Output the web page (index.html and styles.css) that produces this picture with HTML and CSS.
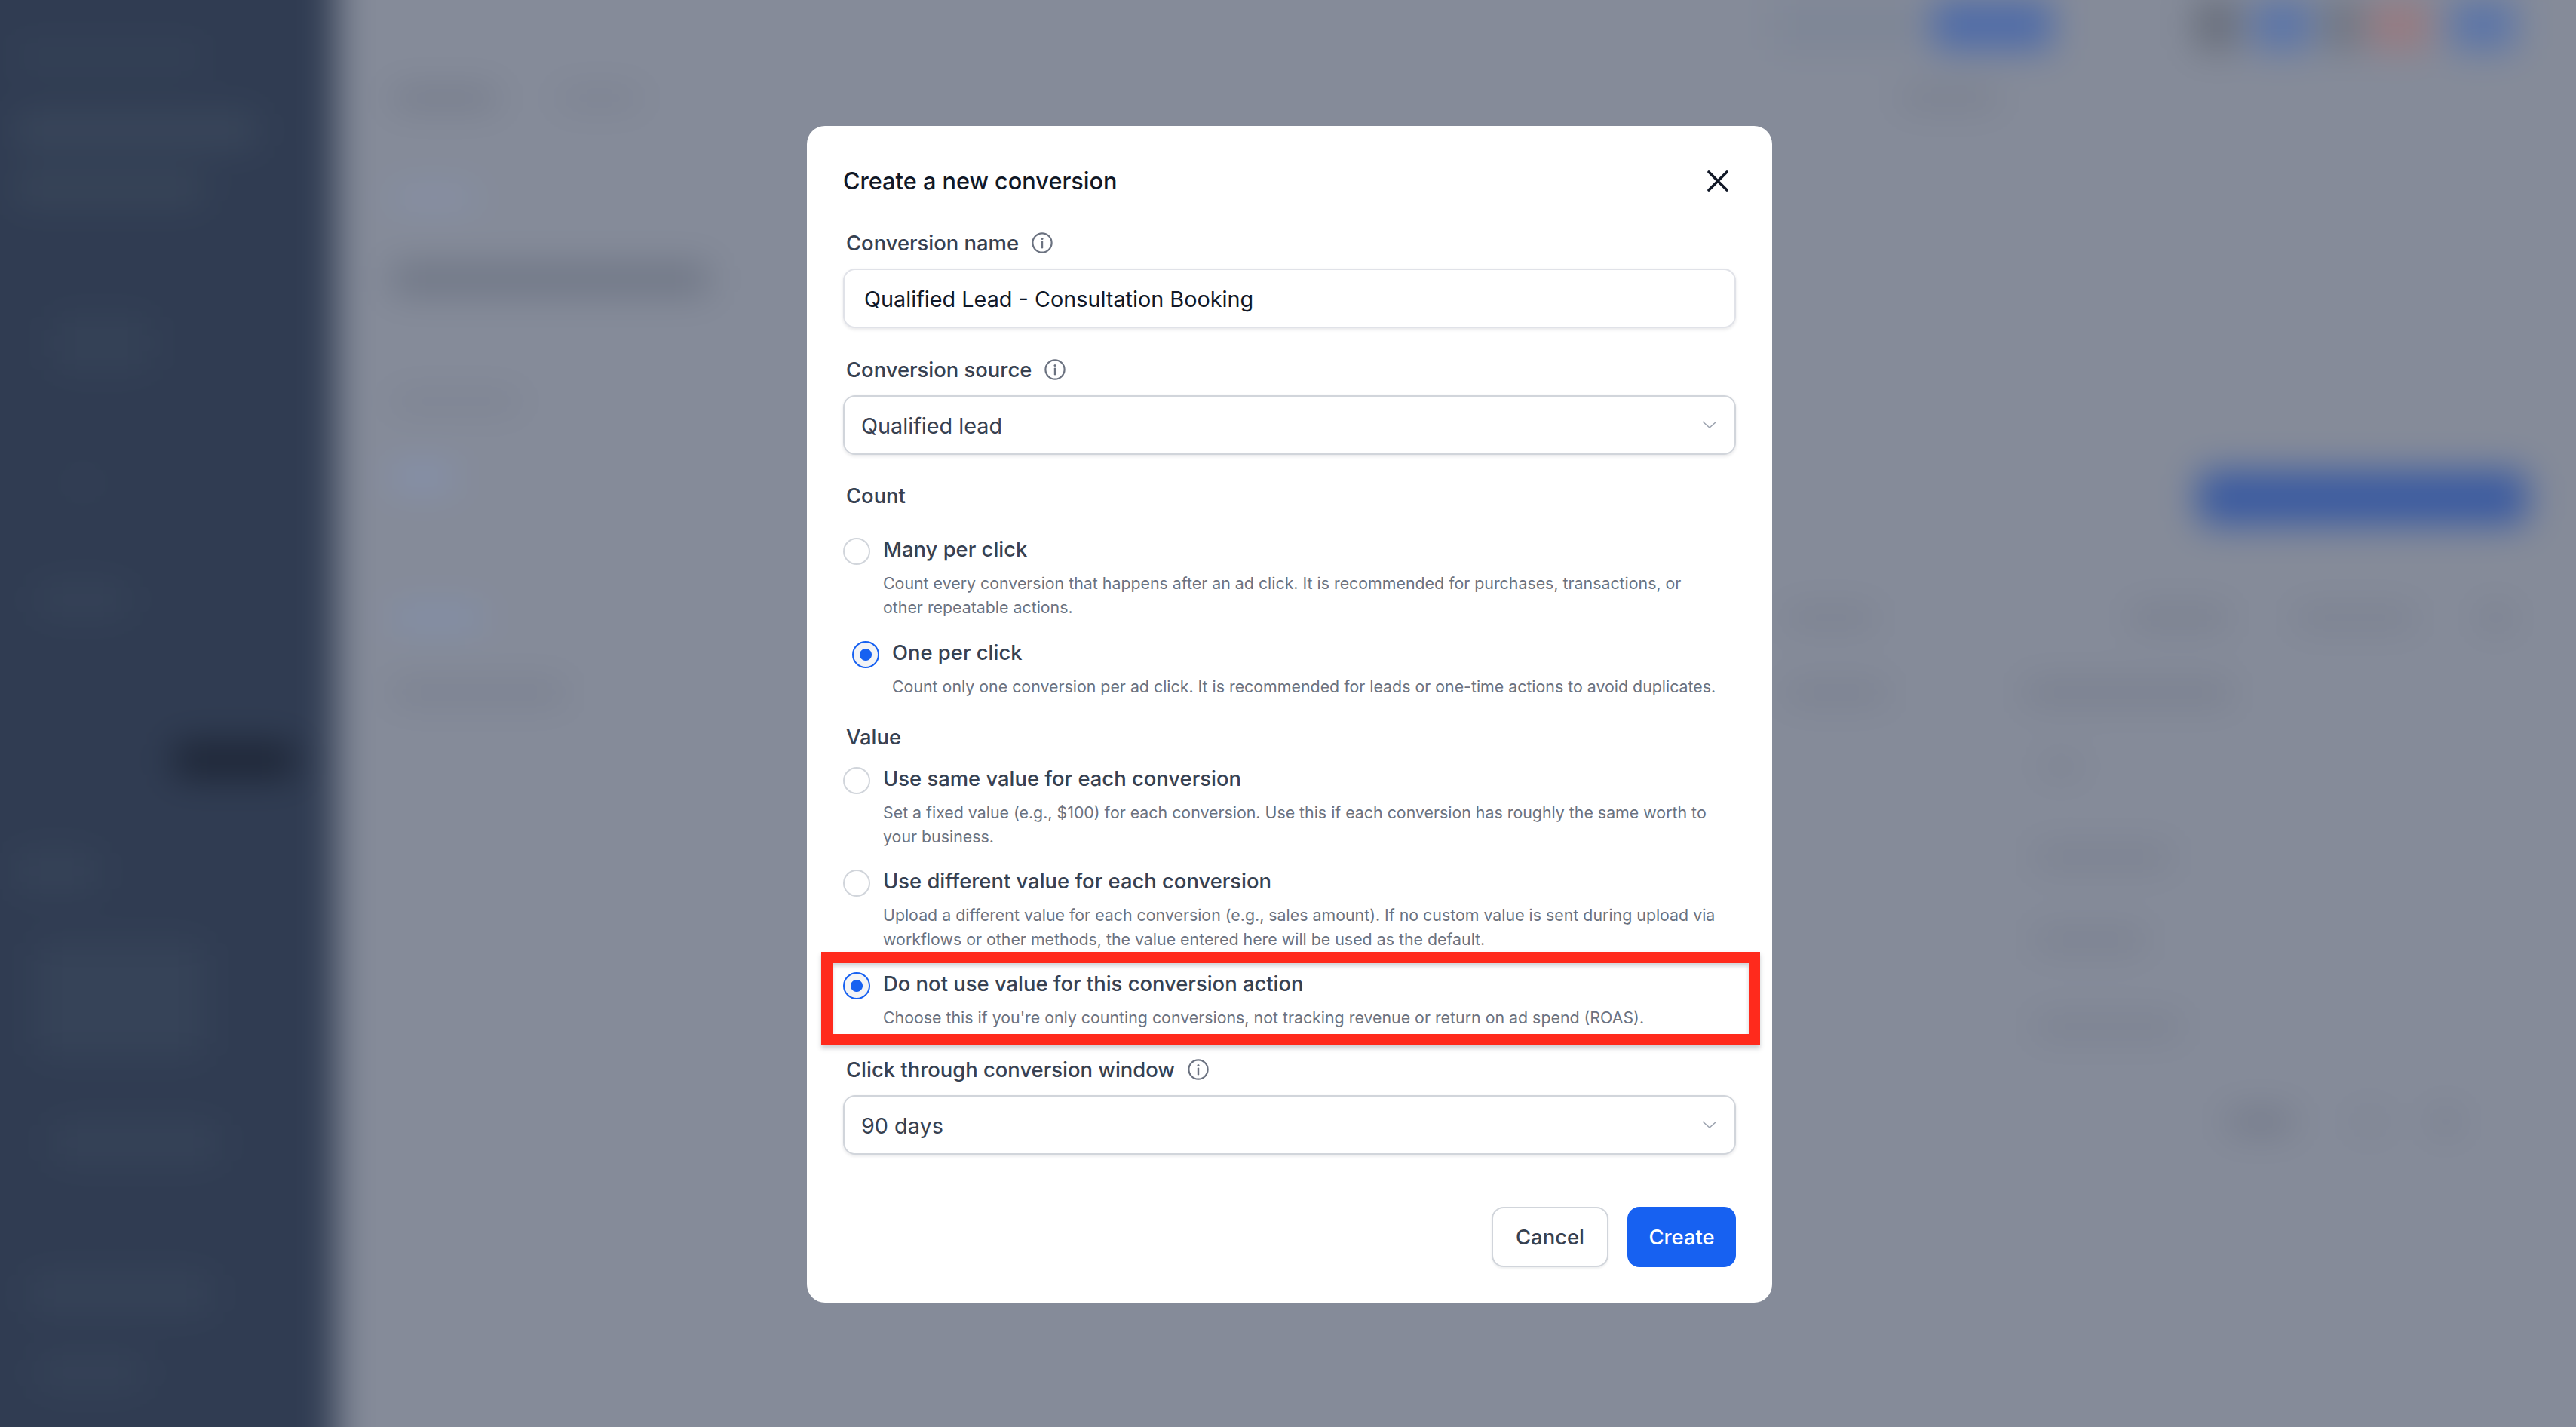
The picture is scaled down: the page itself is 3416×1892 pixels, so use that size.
FILE: index.html
```html
<!DOCTYPE html>
<html lang="en">
<head>
<meta charset="utf-8">
<title>Create a new conversion</title>
<link rel="stylesheet" href="styles.css">
</head>
<body>
<div class="app" aria-hidden="true">
  <aside class="sidebar">
    <div class="nav nav-a"></div>
    <div class="nav nav-b"></div>
    <div class="nav nav-c"></div>
    <div class="nav nav-d"></div>
    <div class="nav nav-e"></div>
    <div class="nav nav-f"></div>
    <div class="nav nav-active"></div>
    <div class="nav nav-g"></div>
    <div class="nav nav-h"></div>
    <div class="nav nav-i"></div>
    <div class="nav nav-j"></div>
    <div class="nav nav-k"></div>
  </aside>
  <main class="main">
    <div class="topbar">
      <span class="blob t-search"></span>
      <span class="blob t-upgrade"></span>
      <span class="blob t-gray1"></span>
      <span class="blob t-blue1"></span>
      <span class="blob t-gray2"></span>
      <span class="blob t-red"></span>
      <span class="blob t-blue2"></span>
    </div>
    <div class="row tabs">
      <span class="blob tab1"></span>
      <span class="blob tab2"></span>
      <span class="blob tab3"></span>
    </div>
    <div class="row crumb"><span class="blob crumb1"></span></div>
    <div class="row heading"><span class="blob h1bar"></span></div>
    <div class="row filters"><span class="blob fil1"></span></div>
    <div class="row action">
      <span class="blob act1"></span>
      <span class="blob act-btn"></span>
    </div>
    <div class="row head1">
      <span class="blob l1"></span>
      <span class="blob r1a"></span>
      <span class="blob r1b"></span>
      <span class="blob r1c"></span>
      <span class="blob r1d"></span>
    </div>
    <div class="row head2">
      <span class="blob l2"></span>
      <span class="blob r2a"></span>
      <span class="blob r2b"></span>
    </div>
    <div class="row r3"><span class="blob r3a"></span></div>
    <div class="row r4"><span class="blob r4a"></span></div>
    <div class="row r5"><span class="blob r5a"></span></div>
    <div class="row r6"><span class="blob r6a"></span></div>
    <div class="row r7">
      <span class="blob r7a"></span>
      <span class="blob r7b"></span>
      <span class="blob r7c"></span>
    </div>
  </main>
</div>

<div class="overlay">
  <form class="modal">
    <header class="modal-head">
      <h2 class="modal-title">Create a new conversion</h2>
      <button type="button" class="close" aria-label="Close">
        <svg viewBox="0 0 28 28" width="28" height="28"><path d="M2 2 26 26M26 2 2 26" fill="none" stroke="#111827" stroke-width="3.6" stroke-linecap="round"/></svg>
      </button>
    </header>

    <div class="label label-first">
      <span>Conversion name</span>
      <svg class="info" viewBox="0 0 30 30" width="30" height="30"><circle cx="15" cy="15" r="12.6" fill="none" stroke="#6b7280" stroke-width="2.2"/><circle cx="15" cy="9.6" r="1.5" fill="#6b7280"/><path d="M15 13.6v7.6" stroke="#6b7280" stroke-width="2.4" stroke-linecap="round"/></svg>
    </div>
    <div class="field field-input">Qualified Lead - Consultation Booking</div>

    <div class="label label-next">
      <span>Conversion source</span>
      <svg class="info" viewBox="0 0 30 30" width="30" height="30"><circle cx="15" cy="15" r="12.6" fill="none" stroke="#6b7280" stroke-width="2.2"/><circle cx="15" cy="9.6" r="1.5" fill="#6b7280"/><path d="M15 13.6v7.6" stroke="#6b7280" stroke-width="2.4" stroke-linecap="round"/></svg>
    </div>
    <div class="field field-select">
      <span>Qualified lead</span>
      <svg class="chev" viewBox="0 0 22 12" width="22" height="12"><path d="M2 2 11 10 20 2" fill="none" stroke="#9ca3af" stroke-width="1.6"/></svg>
    </div>

    <div class="label label-count">Count</div>

    <div class="option opt-many">
      <span class="radio"></span>
      <div class="opt-body">
        <div class="opt-title">Many per click</div>
        <p class="opt-desc">Count every conversion that happens after an ad click. It is recommended for purchases, transactions, or other repeatable actions.</p>
      </div>
    </div>
    <div class="option opt-one">
      <span class="radio radio-on"></span>
      <div class="opt-body">
        <div class="opt-title">One per click</div>
        <p class="opt-desc">Count only one conversion per ad click. It is recommended for leads or one-time actions to avoid duplicates.</p>
      </div>
    </div>

    <div class="label label-value">Value</div>

    <div class="option opt-same">
      <span class="radio"></span>
      <div class="opt-body">
        <div class="opt-title">Use same value for each conversion</div>
        <p class="opt-desc">Set a fixed value (e.g., $100) for each conversion. Use this if each conversion has roughly the same worth to your business.</p>
      </div>
    </div>
    <div class="option opt-diff">
      <span class="radio"></span>
      <div class="opt-body">
        <div class="opt-title">Use different value for each conversion</div>
        <p class="opt-desc">Upload a different value for each conversion (e.g., sales amount). If no custom value is sent during upload via workflows or other methods, the value entered here will be used as the default.</p>
      </div>
    </div>
    <div class="option opt-none">
      <span class="highlight"></span>
      <span class="radio radio-on"></span>
      <div class="opt-body">
        <div class="opt-title">Do not use value for this conversion action</div>
        <p class="opt-desc">Choose this if you're only counting conversions, not tracking revenue or return on ad spend (ROAS).</p>
      </div>
    </div>

    <div class="label label-window">
      <span>Click through conversion window</span>
      <svg class="info" viewBox="0 0 30 30" width="30" height="30"><circle cx="15" cy="15" r="12.6" fill="none" stroke="#6b7280" stroke-width="2.2"/><circle cx="15" cy="9.6" r="1.5" fill="#6b7280"/><path d="M15 13.6v7.6" stroke="#6b7280" stroke-width="2.4" stroke-linecap="round"/></svg>
    </div>
    <div class="field field-select">
      <span>90 days</span>
      <svg class="chev" viewBox="0 0 22 12" width="22" height="12"><path d="M2 2 11 10 20 2" fill="none" stroke="#9ca3af" stroke-width="1.6"/></svg>
    </div>

    <footer class="actions">
      <button type="button" class="btn btn-cancel">Cancel</button>
      <button type="button" class="btn btn-create">Create</button>
    </footer>
  </form>
</div>
</body>
</html>
```
FILE: styles.css
```css
* { box-sizing: border-box; }
html, body { margin: 0; padding: 0; height: 100%; overflow: hidden; background: #858b99; }
body { font-family: Inter, "Noto Sans", sans-serif; color: #374151; }

/* blurred application behind the dialog */
.app {
  display: flex;
  width: calc(100% + 120px);
  height: calc(100% + 120px);
  margin: -60px;
  filter: blur(24px);
  background: #858b99;
}
.sidebar {
  flex: 0 0 506px;
  background: #303c52;
  padding: 120px 0 0 80px;
  display: flex;
  flex-direction: column;
}
.nav { border-radius: 10px; flex: none; background: #364358; }
.nav-a { width: 250px; height: 30px; background: #354257; }
.nav-b { width: 320px; height: 45px; margin-top: 60px; background: #3a475b; }
.nav-c { width: 250px; height: 40px; margin-top: 35px; background: #394659; }
.nav-d { width: 130px; height: 70px; margin: 150px 0 0 50px; background: #354257; }
.nav-e { width: 40px; height: 20px; margin: 140px 0 0 70px; background: #354257; }
.nav-f { width: 120px; height: 40px; margin: 125px 0 0 30px; background: #364358; }
.nav-active { width: 162px; height: 45px; margin: 170px 0 0 210px; background: #1c2434; }
.nav-g { width: 110px; height: 50px; margin-top: 100px; background: #364358; }
.nav-h { width: 220px; height: 150px; margin: 70px 0 0 30px; background: #364358; }
.nav-i { width: 220px; height: 50px; margin: 90px 0 0 50px; background: #364358; }
.nav-j { width: 240px; height: 50px; margin: 150px 0 0 20px; background: #364358; }
.nav-k { width: 140px; height: 40px; margin: 60px 0 0 30px; background: #364358; }

.main { flex: 1; padding: 60px 0 0 74px; display: flex; flex-direction: column; }
.blob { display: block; height: 100%; border-radius: 8px; background: #7b8190; flex: none; }
.row { display: flex; align-items: center; flex: none; }

.topbar { display: flex; justify-content: flex-end; height: 66px; padding-right: 140px; flex: none; }
.t-search { width: 190px; margin-right: 20px; background: #7e8696; }
.t-upgrade { width: 160px; margin-right: 190px; background: #4e6ba8; }
.t-gray1 { width: 54px; margin-right: 20px; background: #666c79; }
.t-blue1 { width: 81px; margin-right: 18px; background: #5a74a8; }
.t-gray2 { width: 45px; margin-right: 11px; background: #6d7380; }
.t-red { width: 81px; margin-right: 27px; background: #977a80; }
.t-blue2 { width: 87px; background: #5a74a8; }

.tabs { height: 22px; margin-top: 53px; }
.tab1 { width: 140px; background: #717786; }
.tab2 { width: 110px; margin-left: 80px; background: #7a808f; }
.tab3 { width: 130px; margin-left: 1670px; background: #777d8c; }
.crumb { height: 20px; margin-top: 111px; }
.crumb1 { width: 110px; background: #8792ad; }
.heading { height: 52px; margin-top: 72px; }
.h1bar { width: 420px; height: 40px; background: #6e7584; }
.filters { height: 20px; margin-top: 126px; }
.fil1 { width: 170px; background: #7a808f; }
.action { height: 86px; margin-top: 75px; }
.act1 { width: 80px; height: 30px; align-self: flex-start; background: #8492b0; }
.act-btn { width: 438px; height: 72px; margin-left: 2314px; border-radius: 18px; background: #3a5aa0; }
.head1 { height: 26px; margin-top: 103px; }
.l1 { width: 120px; background: #8290ad; }
.r1a { width: 120px; margin-left: 1728px; background: #7a808f; }
.r1b { width: 130px; margin-left: 337px; background: #787e8d; }
.r1c { width: 160px; margin-left: 88px; background: #7a808f; }
.r1d { width: 40px; margin-left: 87px; background: #767c8b; }
.head2 { height: 28px; margin-top: 72px; }
.l2 { width: 230px; background: #7a808f; }
.r2a { width: 135px; margin-left: 1618px; background: #7a808f; }
.r2b { width: 276px; margin-left: 181px; background: #787e8d; }
.r3 { height: 18px; margin-top: 75px; }
.r3a { width: 50px; margin-left: 2188px; background: #767c8b; }
.r4 { height: 28px; margin-top: 97px; }
.r4a { width: 182px; margin-left: 2178px; background: #7a808f; }
.r5 { height: 28px; margin-top: 82px; }
.r5a { width: 148px; margin-left: 2178px; background: #7a808f; }
.r6 { height: 26px; margin-top: 88px; }
.r6a { width: 195px; margin-left: 2178px; background: #7a808f; }
.r7 { height: 26px; margin-top: 100px; }
.r7a { width: 87px; margin-left: 2434px; background: #707686; }
.r7b { width: 41px; margin-left: 81px; background: #7b8190; }
.r7c { width: 27px; margin-left: 67px; background: #707686; }

/* dialog */
.overlay {
  position: fixed;
  inset: 0;
  display: flex;
  align-items: center;
  justify-content: center;
  padding: 2px 0 0 4px;
}
.modal {
  width: 1280px;
  height: 1560px;
  background: #fff;
  border-radius: 24px;
  padding: 48px 48px 48px;
  display: flex;
  flex-direction: column;
}
.modal-head { display: flex; align-items: center; justify-content: space-between; height: 50px; flex: none; }
.modal-title { margin: 0; font-size: 30.7px; line-height: 50px; font-weight: 470; color: #111827; }
.close { border: 0; background: none; padding: 0; margin-right: 10px; width: 28px; height: 28px; display: block; }
.close svg { display: block; }

.label {
  display: flex;
  align-items: center;
  gap: 16px;
  height: 40px;
  padding-left: 4px;
  font-size: 27.4px;
  font-weight: 460;
  color: #374151;
  flex: none;
}
.info { display: block; flex: none; }
.label-first { margin-top: 37px; }
.label-next { margin-top: 35px; }
.label-count { margin-top: 34px; }
.label-value { margin-top: 31px; }
.label-window { margin-top: 33px; }

.field {
  height: 79px;
  margin-top: 14px;
  border: 2px solid #d1d5db;
  border-radius: 16px;
  background: #fff;
  box-shadow: 0 2px 4px rgba(17, 24, 39, .1);
  display: flex;
  align-items: center;
  font-size: 28.8px;
  flex: none;
}
.field-input { padding: 2px 0 0 26px; color: #111827; border-color: #e0e2e8; }
.field-select { padding: 2px 22px 0 22px; justify-content: space-between; color: #374151; }
.chev { display: block; margin-top: -4px; }

.option { position: relative; display: flex; gap: 17px; padding-right: 24px; flex: none; }
.opt-many { margin-top: 31px; }
.opt-one { margin-top: 24px; padding-left: 12px; }
.opt-same { margin-top: 15px; }
.opt-diff { margin-top: 23px; }
.opt-none { margin-top: 23px; }
.radio {
  flex: none;
  width: 36px;
  height: 36px;
  margin-top: 5px;
  border: 2.5px solid #d1d5db;
  border-radius: 50%;
  background: #fff;
}
.radio-on {
  border-color: #1761f1;
  background: radial-gradient(circle, #1761f1 0 7.5px, #f3f4f6 8.5px);
}
.opt-body { min-width: 0; flex: 1; }
.opt-title { font-size: 27.4px; line-height: 40px; font-weight: 460; color: #374151; }
.opt-desc { margin: 9px 0 0; font-size: 21.35px; line-height: 32px; color: #6b7280; }

/* red annotation frame drawn over the third value option */
.highlight {
  position: absolute;
  left: -29px;
  right: -32px;
  top: -22px;
  height: 124px;
  border: 15px solid #ff2a1c;
  box-shadow: 0 4px 6px rgba(55, 65, 81, .25), inset 0 4px 5px rgba(55, 65, 81, .22);
  pointer-events: none;
}

.actions { display: flex; justify-content: flex-end; gap: 25px; margin-top: 69px; flex: none; }
.btn {
  height: 80px;
  border-radius: 16px;
  font-family: inherit;
  font-size: 27.4px;
  font-weight: 460;
  padding: 0;
}
.btn-cancel { width: 155px; background: #fff; color: #374151; border: 2.5px solid #d1d5db; box-shadow: 0 2px 3px rgba(17, 24, 39, .07); }
.btn-create { width: 144px; background: #1761f1; color: #fff; border: 0; }
```
